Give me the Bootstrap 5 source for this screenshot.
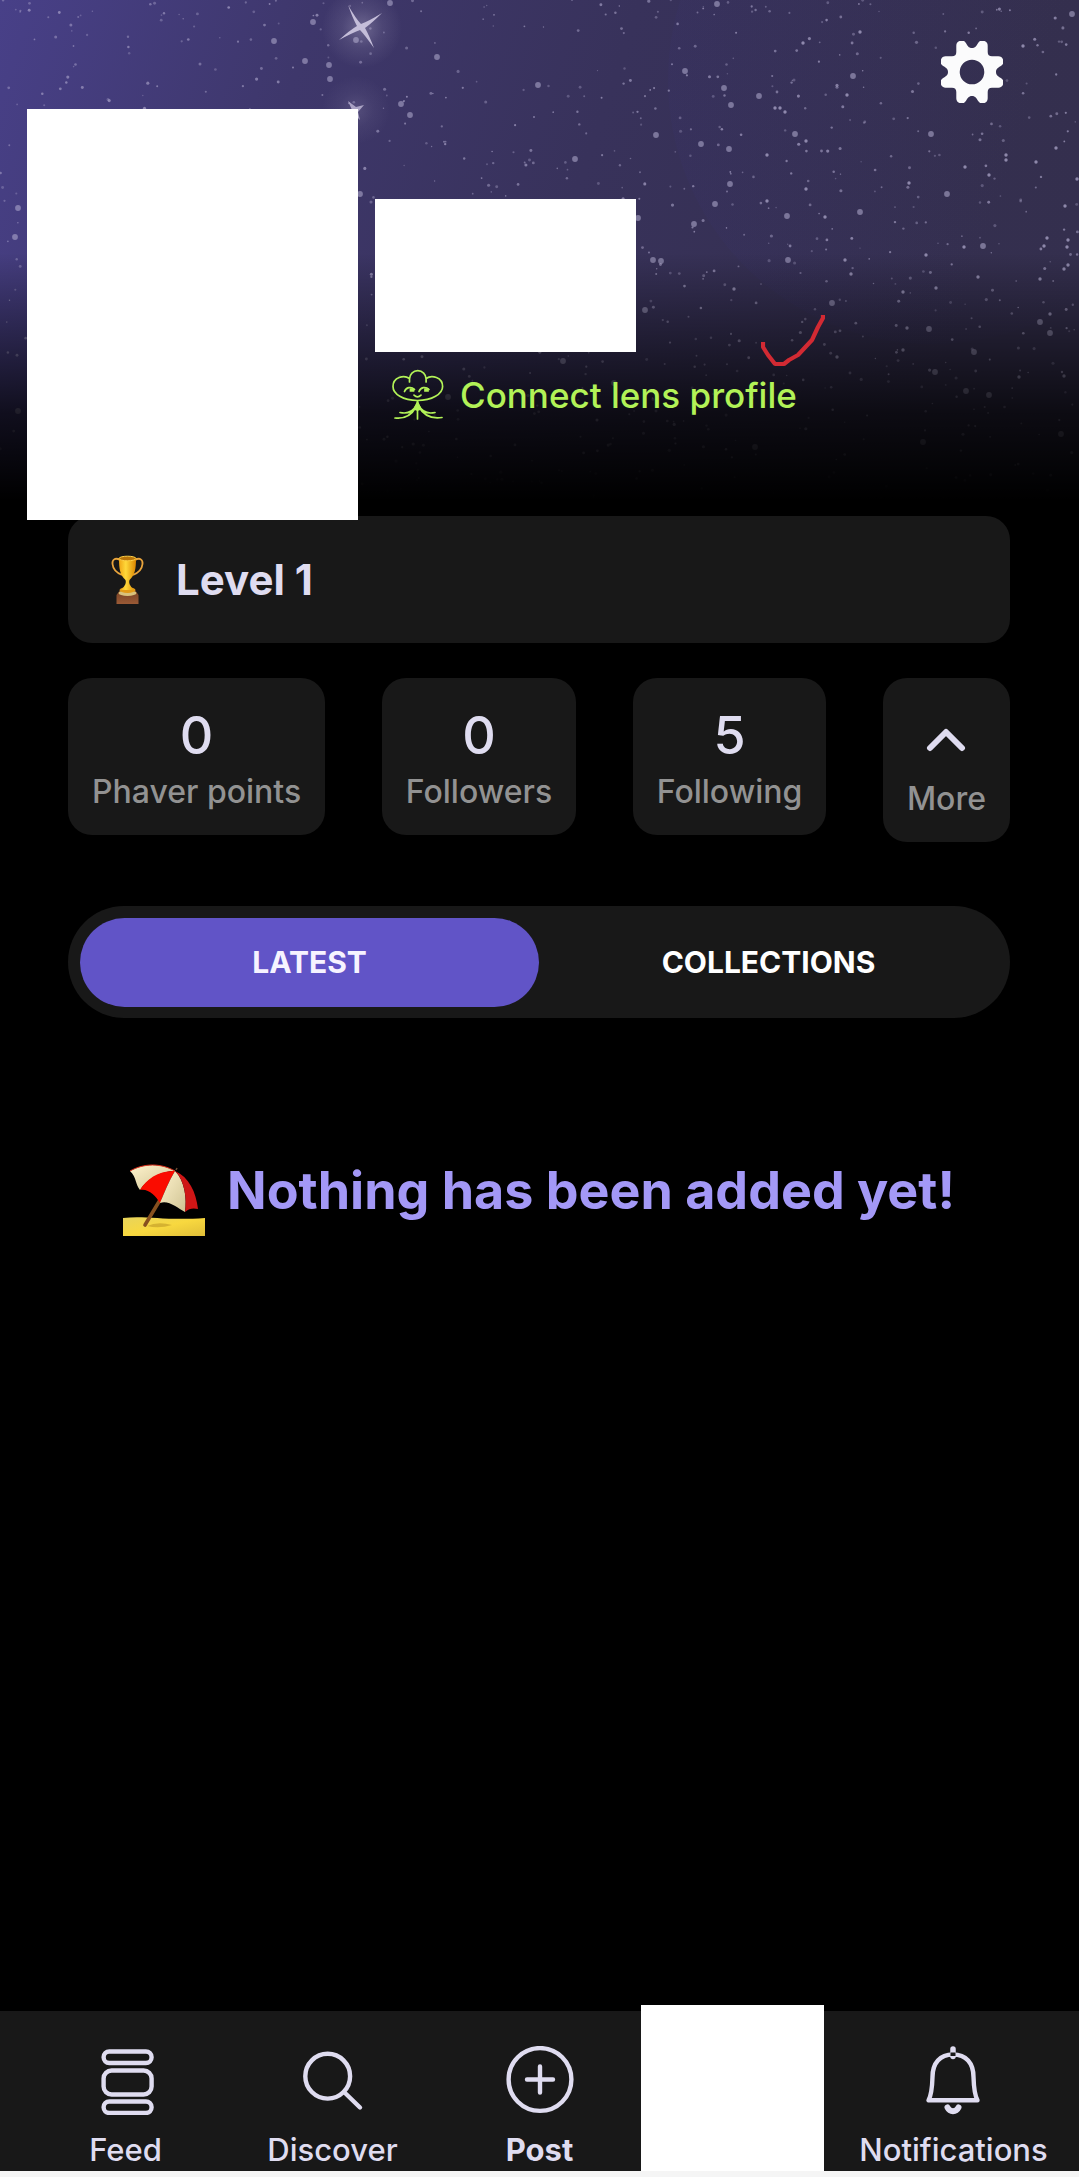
<!DOCTYPE html>
<html lang="en">
<head>
<meta charset="utf-8">
<meta name="viewport" content="width=device-width, initial-scale=1">
<title>Profile</title>
<link href="https://cdn.jsdelivr.net/npm/bootstrap@5.3.0/dist/css/bootstrap.min.css" rel="stylesheet">
<style>
  :root { --panel: #181818; --ink: #dfdcf0; --muted: #929292; --violet: #6154c7; --lilac: #a398f6; --lime: #b2f257; }
  body { background: #000; color: var(--ink); font-family: Inter, "Liberation Sans", sans-serif; }
  svg { display: block; flex: none; }
  .sky { height: 516px; z-index: 0; }
  .hero { padding: 41px 27px 0; }
  .gear { margin-right: 49px; margin-bottom: 6px; }
  .photo { width: 331px; height: 411px; margin-bottom: -4px; }
  .who { margin: 90px 0 0 17px; }
  .who-name { width: 261px; height: 153px; }
  .lens { margin: 17px 0 0 17px; gap: 16px; font-size: 35px; line-height: 51px; font-weight: 500; color: var(--lime); }
  .lens:hover { color: var(--lime); }
  .tick { right: -28px; top: -54px; }
  .page-body { padding: 0 69px 0 68px; }
  .panel { background: var(--panel); border-radius: 24px; }
  .level { padding: 0 43px; gap: 32px; height: 127px; font-size: 42px; font-weight: 700; }
  .stats { margin-top: 35px; }
  .stat { padding: 24px 24px 21px; border: 0; color: var(--muted); font-size: 32px; line-height: 44px; font-weight: 500; }
  .stat-num { color: var(--ink); font-size: 52px; line-height: 68px; }
  .stat-icon { height: 75px; }
  .switcher { margin-top: 64px; padding: 12px 12px 11px; border-radius: 56px; }
  .switcher .nav-link { height: 89px; padding: 0; border-radius: 45px; color: #fff; font-size: 30px; font-weight: 700; }
  .switcher .nav-link.active { background: var(--violet); color: #f6f3ff; }
  .empty { margin-top: 143px; gap: 22px; color: var(--lilac); font-size: 52px; line-height: 60px; font-weight: 700; }
  .empty svg { margin-top: 3px; }
  .tabbar { background: var(--panel); padding: 0 22px; border-bottom: 6px solid #f5f5f5; }
  .slot { flex: 1 1 0; min-width: 0; height: 160px; }
  .tab-item { padding-top: 35px; gap: 14px; color: var(--ink); font-size: 31px; line-height: 42px; font-weight: 500; white-space: nowrap; }
  .me { width: 183px; height: 166px; margin: -6px 0 0 -2px; background: #fff; }
  .line { fill: none; stroke: currentColor; stroke-width: 4.4; stroke-linecap: round; stroke-linejoin: round; }
</style>
</head>
<body>
<div class="d-flex flex-column min-vh-100 position-relative">

  <svg class="sky position-absolute top-0 start-0 w-100" viewBox="0 0 1079 516" preserveAspectRatio="xMidYMin slice" aria-hidden="true">
    <defs>
      <linearGradient id="night" gradientUnits="userSpaceOnUse" x1="0" y1="0" x2="960" y2="320">
        <stop offset="0" stop-color="#484088"/><stop offset=".3" stop-color="#3e376b"/><stop offset=".6" stop-color="#38325b"/><stop offset="1" stop-color="#342f4d"/>
      </linearGradient>
      <linearGradient id="moon" x1="0" y1="0" x2="1" y2="0">
        <stop offset="0" stop-color="#3c3590" stop-opacity=".07"/><stop offset="1" stop-color="#3c3590" stop-opacity="0"/>
      </linearGradient>
      <linearGradient id="dusk" x1="0" y1="0" x2="0" y2="1">
        <stop offset=".49" stop-opacity="0"/><stop offset=".65" stop-opacity=".4"/><stop offset=".8" stop-opacity=".76"/><stop offset=".97" stop-opacity="1"/>
      </linearGradient>
      <radialGradient id="glow"><stop offset="0" stop-color="#b9b2cf" stop-opacity=".38"/><stop offset=".5" stop-color="#b9b2cf" stop-opacity=".13"/><stop offset="1" stop-color="#b9b2cf" stop-opacity="0"/></radialGradient>
    </defs>
    <rect width="1079" height="516" fill="url(#night)"/>
    <circle cx="932" cy="80" r="264" fill="url(#moon)"/>
    <g id="stars" fill="#b5aed2"></g>
    <circle cx="362" cy="28" r="40" fill="url(#glow)"/>
    <circle cx="356" cy="110" r="34" fill="url(#glow)" opacity=".5"/>
    <path fill="#c4bdd9" d="M348 5Q356 19 361 24Q369 21 382 13Q372 23 365 28Q369 35 374 48Q364 34 360 30Q352 33 339 40Q350 30 357 26Q353 19 348 5Z"/>
    <path fill="#aaa3c4" d="M348 101L356 107L364 105L358 112L360 120L354 114L346 117L352 110Z"/>
    <rect width="1079" height="516" fill="url(#dusk)"/>
  </svg>

  <header class="hero position-relative">
    <div class="d-flex justify-content-end">
      <button type="button" class="gear btn p-0 border-0" aria-label="Settings">
        <svg width="62" height="62" viewBox="-31 -31 62 62"><path fill="#fbfbfc" fill-rule="evenodd" d="M0-24C-3.500-24-4.500-26.500-6-28.800A5.200 5.200 0 0 0-15.700-26V-20Q-15.700-15.700-20-15.700H-26A5.200 5.200 0 0 0-28.800-6C-26.500-4.500-24-3.500-24 0C-24 3.500-26.500 4.500-28.800 6A5.200 5.200 0 0 0-26 15.700H-20Q-15.700 15.700-15.700 20V26A5.200 5.200 0 0 0-6 28.800C-4.500 26.500-3.500 24 0 24C3.500 24 4.500 26.500 6 28.800A5.200 5.200 0 0 0 15.700 26V20Q15.700 15.700 20 15.700H26A5.200 5.200 0 0 0 28.800 6C26.500 4.500 24 3.500 24 0C24-3.500 26.500-4.500 28.800-6A5.200 5.200 0 0 0 26-15.700H20Q15.700-15.700 15.700-20V-26A5.200 5.200 0 0 0 6-28.800C4.500-26.500 3.500-24 0-24ZM0-12.300A12.300 12.300 0 1 1 0 12.300A12.300 12.300 0 1 1 0-12.300Z"/></svg>
      </button>
    </div>
    <div class="d-flex align-items-start">
      <div class="photo bg-white flex-shrink-0 position-relative z-1"></div>
      <div class="who">
        <div class="who-name bg-white"></div>
        <a href="#" class="lens d-flex align-items-center position-relative text-decoration-none">
          <svg width="52" height="52" viewBox="0 0 52 52" fill="none" stroke="currentColor" stroke-width="1.700" stroke-linecap="round">
            <path d="M17.500 13V10a8.300 8.300 0 0 1 16.600 0v3M17.500 9.500C12 5.500 1 8 1 17.500 1 25 11 31.500 25.500 31.500S50.600 25 50.600 17.500C50.600 8 39.600 5.500 34.100 9.500"/>
            <path d="M12.500 22.500C14 18.500 19 17 22.500 20.500M27 22.500C28.500 18.500 33.500 17 37 20.500M22 26.200Q25.500 29.500 29 26.200"/>
            <path fill="currentColor" d="M18.500 20.200h3v1.800h-3zM33 20.200h3v1.800h-3zM25.500 33L22.500 40L25.500 41L28.500 40Z"/>
            <path d="M25.500 32V50M24.500 36C21 43 15 45 8 43.500M24 38C19 47 11 50 3 49M26.500 36C30 43 36 45 43 43.500M27 38C32 47 40 50 50 48.500"/>
          </svg>
          <span>Connect lens profile</span>
          <svg class="tick position-absolute" width="64" height="52" viewBox="761 315 64 52" fill="none" stroke="#d22a33" stroke-width="4.200" stroke-linecap="square" stroke-linejoin="bevel" aria-hidden="true"><path d="M763 344V347L768 355L775 364H784L789 360L798 355L812 340L818 327L823 318V317"/></svg>
        </a>
      </div>
    </div>
  </header>

  <main class="page-body flex-grow-1 position-relative">
    <section class="panel level d-flex align-items-center">
      <svg width="33" height="50" viewBox="0 0 33 50" aria-hidden="true">
        <defs>
          <linearGradient id="gold"><stop offset="0" stop-color="#f0a414"/><stop offset=".4" stop-color="#ffd83a"/><stop offset="1" stop-color="#d98500"/></linearGradient>
          <linearGradient id="wood" x1="0" y1="0" x2="0" y2="1"><stop offset="0" stop-color="#754023"/><stop offset="1" stop-color="#9a5a36"/></linearGradient>
        </defs>
        <path d="M9 5C4 2 1 5 1.500 9C2 14 6 18 11 20M24 5C29 2 32 5 31.500 9C31 14 27 18 22 20" fill="none" stroke="#e9a43c" stroke-width="1.800"/>
        <path d="M5.500 40L9 35H24L27.500 40V49H5.500Z" fill="url(#wood)"/>
        <ellipse cx="16.500" cy="38" rx="9" ry="3" fill="#d9c27c"/>
        <ellipse cx="16.500" cy="35" rx="8" ry="3" fill="#e29a16"/>
        <path d="M8 3C8 14 9 20 14.500 25C15.500 28 14 31 10 35H23C19 31 17.500 28 18.500 25C24 20 25 14 25 3Z" fill="url(#gold)"/>
        <ellipse cx="16.500" cy="3.500" rx="8.500" ry="2.300" fill="#b87409" stroke="#ffcf45"/>
      </svg>
      <span>Level 1</span>
    </section>

    <section class="stats d-flex justify-content-between align-items-start">
      <div class="panel stat text-center"><div class="stat-num">0</div>Phaver points</div>
      <div class="panel stat text-center"><div class="stat-num">0</div>Followers</div>
      <div class="panel stat text-center"><div class="stat-num">5</div>Following</div>
      <button type="button" class="panel stat text-center">
        <span class="stat-icon d-flex align-items-center justify-content-center"><svg width="40" height="24" viewBox="0 0 40 24" fill="none" stroke="#dfdcf0" stroke-width="6" stroke-linecap="round" stroke-linejoin="round"><path d="M4 20L20 4L36 20"/></svg></span>
        More
      </button>
    </section>

    <div class="panel switcher nav nav-pills nav-fill flex-nowrap" role="tablist">
      <button type="button" class="nav-link active w-50" role="tab" aria-selected="true">LATEST</button>
      <button type="button" class="nav-link w-50" role="tab" aria-selected="false">COLLECTIONS</button>
    </div>

    <section class="empty d-flex justify-content-center align-items-start">
      <svg width="82" height="72" viewBox="0 0 82 72" aria-hidden="true">
        <defs>
          <linearGradient id="sand" x1="0" y1="0" x2="1" y2="1"><stop offset="0" stop-color="#e8d45c"/><stop offset=".5" stop-color="#f8d83f"/><stop offset="1" stop-color="#e0be38"/></linearGradient>
          <linearGradient id="cloth" x1="0" y1="0" x2="1" y2="1"><stop offset="0" stop-color="#fff3cd"/><stop offset="1" stop-color="#cfc393"/></linearGradient>
        </defs>
        <path d="M0 54C22 51 42 57 82 54V72H0Z" fill="url(#sand)"/>
        <path d="M24 62Q35 57 49 61Q36 65 24 62Z" fill="#bf9a26" opacity=".6"/>
        <path d="M53 6L54 4" stroke="#6b4a32" stroke-width="1.500"/>
        <path d="M37 36L22 61" stroke="#86501f" stroke-width="3.600" stroke-linecap="round"/>
        <path d="M7 7C21-1 38-1 52 7C38 7 24 15 17 26C12 20 14 14 7 7Z" fill="url(#cloth)"/>
        <path d="M7 7C21-1 38-1 52 7" fill="none" stroke="#e0301c" stroke-width="1"/>
        <path d="M52 7C37 6 23 15 17 26C25 24 33 32 37 39C41 29 46 17 52 7Z" fill="#fa0c00"/>
        <path d="M52 7C46 17 41 29 37 39C46 36 54 44 62 48C64 35 62 17 52 7Z" fill="url(#cloth)"/>
        <path d="M52 7C62 17 64 35 62 48C66 44 71 44 75 45C73 28 66 13 52 7Z" fill="#cf1616"/>
      </svg>
      <span>Nothing has been added yet!</span>
    </section>
  </main>

  <nav class="tabbar d-flex position-relative">
    <a href="#" class="slot tab-item d-flex flex-column align-items-center text-decoration-none">
      <svg width="70" height="69" viewBox="0 0 70 69" class="line"><rect x="12.600" y="5.500" width="48" height="11.500" rx="5.700"/><rect x="12.600" y="24.500" width="48" height="24" rx="8"/><rect x="12.600" y="55.500" width="48" height="11.500" rx="5.700"/></svg>
      <span>Feed</span></a>
    <a href="#" class="slot tab-item d-flex flex-column align-items-center text-decoration-none">
      <svg width="70" height="69" viewBox="0 0 70 69" class="line"><circle cx="29.700" cy="30.200" r="22.400"/><path d="M46.500 46.500L62 61.500"/></svg>
      <span>Discover</span></a>
    <a href="#" class="slot tab-item d-flex flex-column align-items-center text-decoration-none fw-bold">
      <svg width="70" height="69" viewBox="0 0 70 69" class="line"><circle cx="35" cy="33.500" r="31.400"/><path d="M22 33.500H48M35 20.500V46.500"/></svg>
      <span>Post</span></a>
    <div class="slot"><a href="#" class="me d-block" aria-label="Profile"></a></div>
    <a href="#" class="slot tab-item d-flex flex-column align-items-center text-decoration-none">
      <svg width="70" height="69" viewBox="0 0 70 69" class="line"><path d="M9.500 54.300H58.500Q55 48 54.500 31C54.500 17 47 8.500 34 8.500S13.500 17 13.500 31Q13 48 9.500 54.300Z"/><path d="M28.500 61.500C31 66.500 37 66.500 39.500 61.500" stroke-width="6"/><path d="M34 3V10.500" stroke-width="5.500"/><path d="M31.500 6.500h5v3.500h-5z" fill="#181818" stroke="none"/></svg>
      <span>Notifications</span></a>
  </nav>
</div>

<script src="https://cdn.jsdelivr.net/npm/bootstrap@5.3.0/dist/js/bootstrap.bundle.min.js"></script>
<script>
  // The large stars have fixed places; the fine dust is scattered from a fixed seed.
  const bright = [[313,22],[274,41],[329,65],[356,40],[330,79],[390,3],[401,104],[410,115],[538,85],[18,208],[15,237],[360,194],[305,61],[437,57],
    [717,4],[685,71],[724,88],[731,105],[759,96],[853,76],[656,135],[701,144],[729,149],[795,134],[931,134],[575,159],[730,184],[715,204],[947,194],
    [694,224],[787,216],[860,212],[638,218],[653,260],[661,261],[788,260],[983,246],[832,303],[645,310],[929,329],[1040,322],[1050,333],[1072,14],
    [974,352],[935,372],[966,391],[989,395],[563,361],[614,383],[755,447],[923,442],[1061,434],[448,397],[18,411]];
  const mid = [[803,43],[1023,46],[860,32],[806,141],[767,155],[767,201],[806,189],[825,217],[845,260],[851,274],[965,167],[989,175],[1036,162],
    [1056,148],[1006,155],[1006,160],[909,183],[1077,179],[1065,206],[1047,238],[1067,247],[1068,240],[1044,246],[964,247],[926,255],[1068,265],
    [1064,269],[978,277],[1040,279],[903,292],[936,288],[1050,314],[907,328],[903,350],[837,357],[1019,377],[1064,376],[847,95],[780,108],[775,108],[785,112],[734,289]];
  let seed = 71;
  const rnd = () => (seed = (seed * 16807) % 2147483647) / 2147483647;
  const dot = (x, y, r, o) => `<circle cx="${x}" cy="${y}" r="${r}" opacity="${o}"/>`;
  let out = bright.map(([x, y]) => dot(x, y, 2.9, .55)).join('') + mid.map(([x, y]) => dot(x, y, 1.7, .7)).join('');
  for (let i = 0; i < 1000; i++) {
    out += dot((rnd() * 1079).toFixed(1), (rnd() * 510).toFixed(1), (.7 + rnd() * .9).toFixed(2), (.3 + rnd() * .35).toFixed(2));
  }
  document.getElementById('stars').innerHTML = out;
</script>
</body>
</html>
